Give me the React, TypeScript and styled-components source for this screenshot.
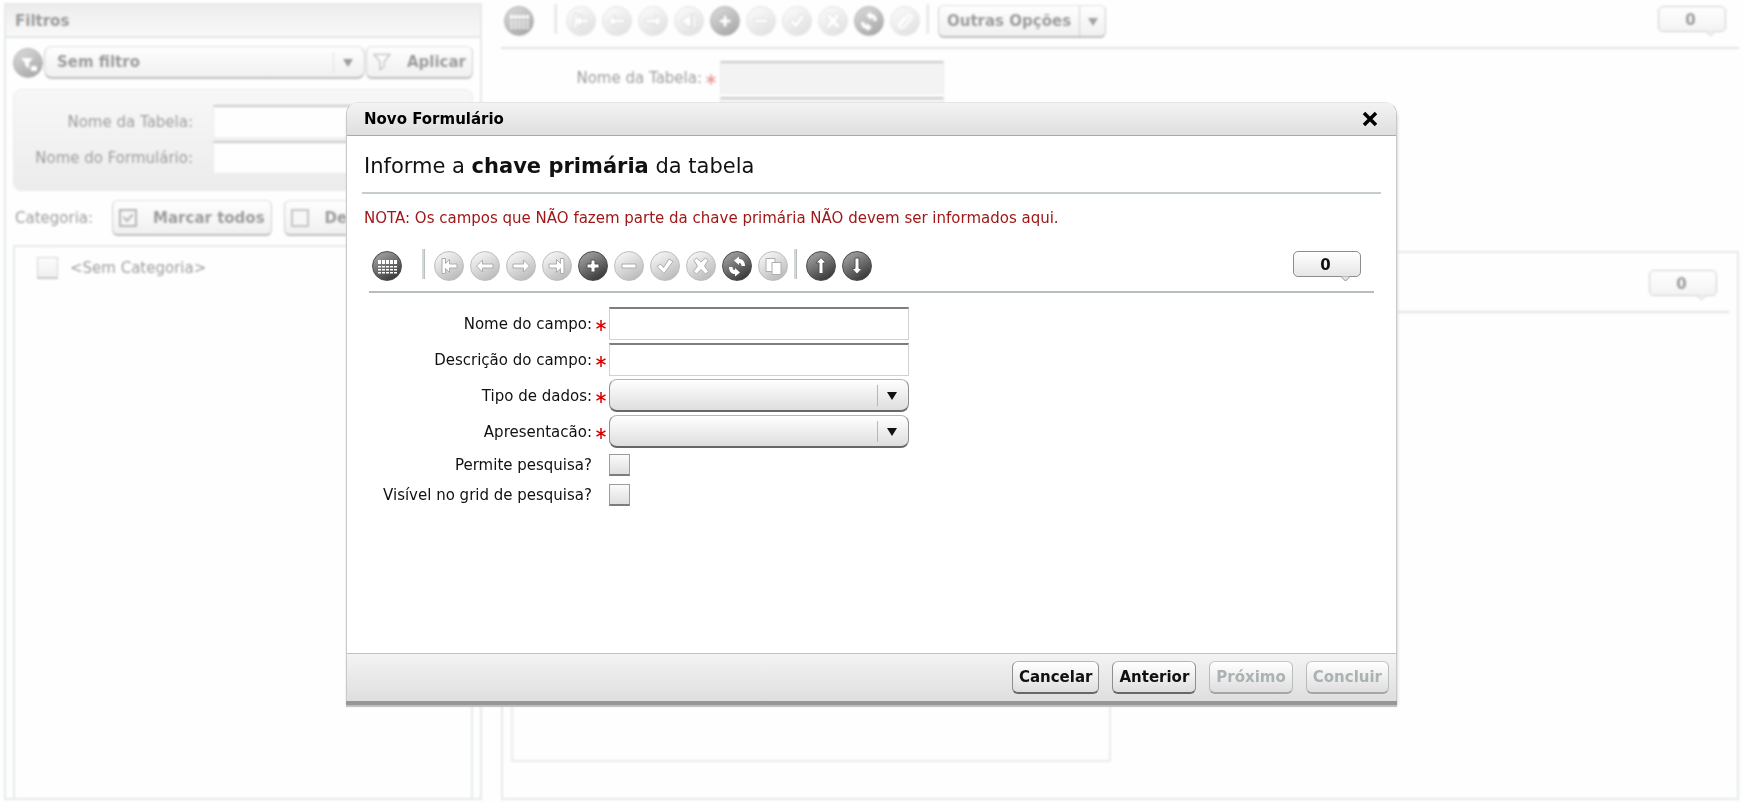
import React from "react";
import styled, { createGlobalStyle, css } from "styled-components";

const GlobalStyle = createGlobalStyle`
  * { box-sizing: border-box; }
  body {
    margin: 0;
    background: #fefefe;
    color: #111;
    font-family: Verdana, "DejaVu Sans", sans-serif;
    font-size: 15px;
    line-height: 20px;
  }
  button, input, select { font: inherit; color: inherit; }
  h1, h2, p { margin: 0; }
`;

/* ---------- shared controls ---------- */

const raised = css`
  background: linear-gradient(#ffffff, #dedede);
  border: 1px solid #8b8f8f;
  border-top-color: #b3b7b7;
  border-bottom: 2px solid #646868;
  border-radius: 6px;
`;

const Button = styled.button`
  ${raised}
  height: 33px;
  padding: 0 6px;
  font-weight: bold;
  white-space: nowrap;
  display: inline-flex;
  align-items: center;
  justify-content: center;
  &:disabled {
    color: #aab3b3;
    border-color: #c4c8c8 #b9bcbc #a4a7a7;
  }
`;

const IconTextButton = styled(Button)<{ $tall?: boolean }>`
  height: ${(p) => (p.$tall ? 36 : 33)}px;
  gap: 16px;
  flex: none;
`;

const SelectShell = styled.span<{ $width?: number }>`
  position: relative;
  display: flex;
  height: 33px;
  ${(p) => (p.$width ? `width: ${p.$width}px;` : "flex: 1; min-width: 0;")}
`;

const SelectBox = styled.select`
  ${raised}
  appearance: none;
  width: 100%;
  padding: 0 40px 0 12px;
  font-weight: bold;
  border-radius: 8px;
`;

const SelectMark = styled.svg`
  position: absolute;
  right: 0;
  top: 0;
  width: 33px;
  height: 33px;
  pointer-events: none;
`;

const TextInput = styled.input<{ $width: number; $off?: boolean }>`
  width: ${(p) => p.$width}px;
  height: 33px;
  padding: 0 6px;
  border: 1px solid #cfd2d2;
  border-top: 2px solid #7c7f7f;
  background: ${(p) => (p.$off ? "#e4e4e4" : "#fff")};
`;

const CheckBox = styled.input`
  appearance: none;
  margin: 0;
  width: 21px;
  height: 22px;
  border: 1px solid #9a9d9d;
  border-bottom: 2px solid #7b7e7e;
  background: linear-gradient(#fbfbfb, #dedede);
`;

function Dropdown({ id, label, value, width }: { id: string; label?: string; value?: string; width?: number }) {
  return (
    <SelectShell $width={width}>
      <SelectBox id={id} aria-label={label}>
        <option>{value ?? ""}</option>
      </SelectBox>
      <SelectMark viewBox="0 0 33 33" aria-hidden="true">
        <path d="M1.500 6v21" stroke="#b5b8b8" />
        <path d="M11 13h10l-5 8z" fill="#111" />
      </SelectMark>
    </SelectShell>
  );
}

/* ---------- toolbar ---------- */

const RoundButton = styled.button<{ $gapAfter?: number }>`
  width: 30px;
  height: 30px;
  flex: none;
  padding: 0;
  margin-right: ${(p) => p.$gapAfter ?? 0}px;
  border: 1px solid #4b4b4b;
  border-radius: 50%;
  background: linear-gradient(150deg, #949494 20%, #3d3d3d 85%);
  display: flex;
  align-items: center;
  justify-content: center;
  &:disabled {
    border-color: #bdbdbd;
    background: linear-gradient(150deg, #eeeeee 20%, #bababa 90%);
  }
  svg { flex: none; display: block; }
`;

type IconName =
  | "grid" | "first" | "prev" | "next" | "last" | "back" | "add" | "remove"
  | "confirm" | "cancel" | "refresh" | "copy" | "clip" | "up" | "down" | "funnel";

const shapes: Record<IconName, React.ReactNode> = {
  grid: (
    <g fill="#fff" stroke="none">
      {[6, 10, 14, 18, 22].map((x) => (
        <React.Fragment key={x}>
          <rect x={x} y="9" width="3" height="4" />
          <rect x={x} y="15" width="3" height="1.500" />
          <rect x={x} y="18" width="3" height="1.500" />
          <rect x={x} y="21" width="3" height="1.500" />
        </React.Fragment>
      ))}
    </g>
  ),
  first: <path d="M8 7.500h3.500v5l4-4v4.500h7.500v4h-7.500v4.500l-4-4v5H8z" />,
  prev: <path d="M6.500 15l6-6v4h10.500v4H12.500v4z" />,
  next: <path d="M23.500 15l-6-6v4H7v4h10.500v4z" />,
  last: <path d="M22 7.500h-3.500v5l-4-4v4.500H7v4h7.500v4.500l4-4v5H22z" />,
  back: <path d="M7 15l10-7v14zM19 8h3v14h-3z" />,
  add: <path d="M13 9h4v4h4v4h-4v4h-4v-4H9v-4h4z" />,
  remove: <path d="M8 13h14v4H8z" />,
  confirm: <path d="M7 15.500l3.500-2.500 3 3.500L19 8l4 2.500-9 12z" />,
  cancel: <path d="M8 9.500L10.500 7l4.500 4L19.500 7 22 9.500 18.500 15l4 5.500-3 2.500-4.500-4.500-4.500 4.500-3-2.500 4-5.500z" />,
  refresh: (
    <g stroke="none">
      <path d="M12 9.500l5-4V8c3.500 0 6 2.500 6 7h-3.500c0-2-.5-3-2.500-3v2z" />
      <path d="M18 21.500l-5 4V23c-3.500 0-6-2.500-6-7h3.500c0 2 .5 3 2.500 3v-2z" />
    </g>
  ),
  copy: (
    <>
      <path d="M8 7.500h9v13H8z" />
      <path d="M14 11.500h9v12h-9z" />
    </>
  ),
  clip: <path d="M10 19l8-9c2-2 5 0 3 3l-7 8c-3 3-7-1-4-4l6-6" fill="none" stroke="#fff" strokeWidth="2" />,
  up: <path d="M15 6.500l5 5.500h-3v10.500h-4V12h-3z" />,
  down: <path d="M15 23l5-5.500h-3V7h-4v10.500h-3z" />,
  funnel: <path d="M8 10h12l-4 5v6l-4-4v-2zM18 18h6v5h-6z" stroke="none" />,
};

const titles: Record<IconName, string> = {
  grid: "Grade", first: "Primeiro", prev: "Voltar", next: "Avançar", last: "Último", back: "Retornar",
  add: "Incluir", remove: "Excluir", confirm: "Confirmar", cancel: "Cancelar edição", refresh: "Atualizar",
  copy: "Copiar", clip: "Anexar", up: "Mover para cima", down: "Mover para baixo", funnel: "Editar filtro",
};

function ToolButton({ icon, off, gapAfter }: { icon: IconName; off?: boolean; gapAfter?: number }) {
  return (
    <RoundButton type="button" disabled={off} aria-label={titles[icon]} $gapAfter={gapAfter}>
      <svg width="30" height="30" viewBox="0 0 30 30" fill="#fff" stroke={off ? "#adadad" : "#555"}>
        {shapes[icon]}
      </svg>
    </RoundButton>
  );
}

const ToolRow = styled.div<{ $pad: string }>`
  display: flex;
  align-items: center;
  gap: 6px;
  padding: ${(p) => p.$pad};
  border-bottom: 2px solid #b6bebe;
`;

const Separator = styled.span`
  width: 3px;
  height: 30px;
  margin: 0 3px 4px 0;
  flex: none;
  background: #d3d9d9;
  border-right: 1px solid #b9c1c1;
`;

const Bubble = styled.output`
  position: relative;
  width: 68px;
  height: 26px;
  margin-left: auto;
  margin-bottom: 4px;
  flex: none;
  border: 1px solid #8c8c8c;
  border-radius: 5px;
  background: linear-gradient(#ffffff, #e6e6e6);
  text-align: center;
  line-height: 26px;
  font-weight: bold;
  padding-right: 3px;
  svg { position: absolute; right: 10px; top: 24px; }
`;

function Counter() {
  return (
    <Bubble>
      0
      <svg width="9" height="6" viewBox="0 0 9 6" aria-hidden="true">
        <path d="M0 .5l4.500 4.500L9 .5" fill="#e6e6e6" stroke="#8c8c8c" />
      </svg>
    </Bubble>
  );
}

/* ---------- page behind the dialog ---------- */

const Page = styled.div`
  min-height: 100vh;
  display: grid;
  grid-template-columns: 478px minmax(0, 1fr);
  gap: 19px;
  padding: 3px 4px;
  filter: blur(1px);
  opacity: 0.42;
`;

const FilterPanel = styled.aside`
  display: flex;
  flex-direction: column;
  border: 2px solid #c6cdcd;
`;

const PanelHeading = styled.h2`
  height: 33px;
  padding: 6px 9px;
  border-bottom: 2px solid #bcc4c4;
  background: linear-gradient(#d6d6d6, #f2f2f2);
  font-size: 15px;
  line-height: 20px;
`;

const PanelBody = styled.div`
  flex: 1;
  display: flex;
  flex-direction: column;
  padding: 8px 7px 0;
`;

const FilterRow = styled.div`
  display: flex;
  align-items: center;
  gap: 1px;
`;

const FilterForm = styled.form`
  display: grid;
  grid-template-columns: 179px minmax(0, 1fr);
  gap: 3px 20px;
  align-items: center;
  margin-top: 10px;
  padding: 15px 12px 16px 0;
  border: 1px solid #cfcfcf;
  border-radius: 8px;
  background: linear-gradient(#efefef, #d4d4d4);
  label { text-align: right; }
`;

const CategoryRow = styled.div`
  display: flex;
  align-items: center;
  gap: 12px;
  margin-top: 9px;
  padding-left: 2px;
  overflow: hidden;
`;

const CategoryLabel = styled.span`
  margin-right: 7px;
`;

const Tree = styled.div`
  flex: 1;
  margin-top: 9px;
  padding: 10px 22px;
  border: 2px solid #c6cdcd;
  border-bottom: 0;
  label { display: flex; align-items: center; gap: 12px; }
`;

const Main = styled.main`
  display: flex;
  flex-direction: column;
`;

const SplitButton = styled.span`
  ${raised}
  display: flex;
  height: 33px;
  flex: none;
  button {
    border: 0;
    background: none;
    padding: 0 8px;
    font-weight: bold;
  }
  button + button { border-left: 1px solid #8b8f8f; width: 26px; }
`;

const TableForm = styled.form`
  display: grid;
  grid-template-columns: 201px 224px;
  gap: 3px 18px;
  align-content: start;
  min-height: 202px;
  padding-top: 12px;
  label { text-align: right; align-self: center; }
`;

const LowerPanel = styled.section`
  flex: 1;
  display: flex;
  flex-direction: column;
  padding: 0 8px 36px;
  border: 2px solid #c6cdcd;
`;

const DetailBox = styled.div`
  flex: 1;
  width: 600px;
  max-width: 100%;
  border: 2px solid #d0d0d0;
`;

const Star = styled.span`
  display: inline-block;
  width: 14px;
  margin-right: -14px;
  text-align: right;
  line-height: 12px;
  svg { vertical-align: -2px; }
`;

function Required() {
  return (
    <Star aria-hidden="true">
      <svg width="10" height="11" viewBox="0 0 10 11" stroke="#d40000" strokeWidth="1.500">
        <path d="M5 0v11M.5 2.800l9 5.400M9.500 2.800l-9 5.400" />
      </svg>
    </Star>
  );
}

function FilterSide() {
  return (
    <FilterPanel>
      <PanelHeading>Filtros</PanelHeading>
      <PanelBody>
        <FilterRow>
          <ToolButton icon="funnel" />
          <Dropdown id="filter" label="Filtro" value="Sem filtro" />
          <IconTextButton type="button">
            <svg width="18" height="18" viewBox="0 0 18 18" fill="#fff" stroke="#777" strokeWidth="1.500" aria-hidden="true">
              <path d="M1 1.500h16l-6 7v5l-4 3v-8z" />
            </svg>
            Aplicar
          </IconTextButton>
        </FilterRow>
        <FilterForm>
          <label htmlFor="f-table">Nome da Tabela:</label>
          <TextInput id="f-table" $width={232} />
          <label htmlFor="f-form">Nome do Formulário:</label>
          <TextInput id="f-form" $width={232} />
        </FilterForm>
        <CategoryRow>
          <CategoryLabel>Categoria:</CategoryLabel>
          <IconTextButton type="button" $tall>
            <svg width="18" height="18" viewBox="0 0 18 18" fill="#eee" stroke="#555" strokeWidth="2" aria-hidden="true">
              <path d="M1 1h16v16H1zM4.500 8l3.500 4 5.500-6.500" />
            </svg>
            Marcar todos
          </IconTextButton>
          <IconTextButton type="button" $tall>
            <svg width="18" height="18" viewBox="0 0 18 18" fill="#eee" stroke="#777" strokeWidth="2" aria-hidden="true">
              <path d="M1 1h16v16H1z" />
            </svg>
            Desmarcar todos
          </IconTextButton>
        </CategoryRow>
        <Tree>
          <label>
            <CheckBox type="checkbox" />
            &lt;Sem Categoria&gt;
          </label>
        </Tree>
      </PanelBody>
    </FilterPanel>
  );
}

function TableSide() {
  return (
    <Main>
      <ToolRow $pad="1px 13px 9px 3px">
        <ToolButton icon="grid" gapAfter={14} />
        <Separator />
        <ToolButton icon="first" off />
        <ToolButton icon="prev" off />
        <ToolButton icon="next" off />
        <ToolButton icon="back" off />
        <ToolButton icon="add" />
        <ToolButton icon="remove" off />
        <ToolButton icon="confirm" off />
        <ToolButton icon="cancel" off />
        <ToolButton icon="refresh" />
        <ToolButton icon="clip" off />
        <Separator />
        <SplitButton>
          <button type="button">Outras Opções</button>
          <button type="button" aria-label="Abrir opções">
            <svg width="10" height="8" viewBox="0 0 10 8" aria-hidden="true">
              <path d="M0 0h10L5 8z" fill="#222" />
            </svg>
          </button>
        </SplitButton>
        <Counter />
      </ToolRow>
      <TableForm>
        <label htmlFor="t-table">
          Nome da Tabela:
          <Required />
        </label>
        <TextInput id="t-table" $width={224} $off />
        <span />
        <TextInput aria-label="Nome do Formulário" $width={224} $off />
      </TableForm>
      <LowerPanel>
        <ToolRow $pad="17px 12px 11px 0">
          <Counter />
        </ToolRow>
        <DetailBox />
      </LowerPanel>
    </Main>
  );
}

/* ---------- dialog ---------- */

const Overlay = styled.div`
  position: fixed;
  inset: 0;
  display: flex;
  align-items: center;
  justify-content: center;
  padding: 0 16px;
`;

const Dialog = styled.section`
  width: 100%;
  max-width: 1051px;
  display: flex;
  flex-direction: column;
  border: 1px solid #c9c9c9;
  border-top-color: #e4e4e4;
  border-bottom: 0;
  border-radius: 12px 12px 0 0;
  background: #fff;
  box-shadow: 0 4px 0 #979797, 0 6px 1px #bdbdbd, 1px 4px 3px #dddddd;
`;

const TitleBar = styled.header`
  display: flex;
  align-items: center;
  justify-content: space-between;
  height: 33px;
  padding: 0 18px 0 17px;
  border-bottom: 1px solid #a9a9a9;
  border-radius: 11px 11px 0 0;
  background: linear-gradient(#f3f3f3, #dfdfdf);
  h1 { font-size: 15px; line-height: 20px; color: #000; }
`;

const CloseButton = styled.button`
  display: flex;
  padding: 0;
  border: 0;
  background: none;
`;

const Body = styled.div`
  flex: 1;
  min-height: 517px;
  padding: 14px 15px 0;
`;

const Lead = styled.p`
  padding: 0 2px 10px;
  border-bottom: 2px solid #c6cdcd;
  font-size: 21px;
  line-height: 32px;
`;

const Note = styled.p`
  padding: 14px 2px 21px;
  color: #a01818;
`;

const Inner = styled.div`
  margin: 0 7px;
`;

const Fields = styled.form`
  display: grid;
  grid-template-columns: 223px minmax(0, 300px);
  gap: 3px 17px;
  padding-top: 14px;
  align-items: center;
  label { text-align: right; white-space: nowrap; }
`;

const CheckCell = styled.div`
  display: flex;
  align-items: center;
  height: 27px;
`;

const Footer = styled.footer`
  display: flex;
  align-items: center;
  justify-content: flex-end;
  gap: 13px;
  height: 48px;
  padding: 0 7px;
  border-top: 1px solid #c2c2c2;
  background: linear-gradient(#f3f3f3, #dfdfdf);
`;

function NewFormDialog() {
  return (
    <Overlay>
      <Dialog role="dialog" aria-labelledby="dialog-title">
        <TitleBar>
          <h1 id="dialog-title">Novo Formulário</h1>
          <CloseButton type="button" aria-label="Fechar">
            <svg width="16" height="16" viewBox="0 0 16 16" stroke="#000" strokeWidth="3.500" aria-hidden="true">
              <path d="M2 2l12 12M14 2L2 14" />
            </svg>
          </CloseButton>
        </TitleBar>
        <Body>
          <Lead>
            Informe a <b>chave primária</b> da tabela
          </Lead>
          <Note>NOTA: Os campos que NÃO fazem parte da chave primária NÃO devem ser informados aqui.</Note>
          <Inner>
            <ToolRow $pad="0 13px 8px 3px">
              <ToolButton icon="grid" gapAfter={14} />
              <Separator />
              <ToolButton icon="first" off />
              <ToolButton icon="prev" off />
              <ToolButton icon="next" off />
              <ToolButton icon="last" off />
              <ToolButton icon="add" />
              <ToolButton icon="remove" off />
              <ToolButton icon="confirm" off />
              <ToolButton icon="cancel" off />
              <ToolButton icon="refresh" />
              <ToolButton icon="copy" off />
              <Separator />
              <ToolButton icon="up" />
              <ToolButton icon="down" />
              <Counter />
            </ToolRow>
            <Fields>
              <label htmlFor="name">
                Nome do campo:
                <Required />
              </label>
              <TextInput id="name" $width={300} />
              <label htmlFor="description">
                Descrição do campo:
                <Required />
              </label>
              <TextInput id="description" $width={300} />
              <label htmlFor="type">
                Tipo de dados:
                <Required />
              </label>
              <Dropdown id="type" width={300} />
              <label htmlFor="presentation">
                Apresentacão:
                <Required />
              </label>
              <Dropdown id="presentation" width={300} />
              <label htmlFor="searchable">Permite pesquisa?</label>
              <CheckCell>
                <CheckBox id="searchable" type="checkbox" />
              </CheckCell>
              <label htmlFor="visible">Visível no grid de pesquisa?</label>
              <CheckCell>
                <CheckBox id="visible" type="checkbox" />
              </CheckCell>
            </Fields>
          </Inner>
        </Body>
        <Footer>
          <Button type="button">Cancelar</Button>
          <Button type="button">Anterior</Button>
          <Button type="button" disabled>Próximo</Button>
          <Button type="button" disabled>Concluir</Button>
        </Footer>
      </Dialog>
    </Overlay>
  );
}

export default function App() {
  return (
    <>
      <GlobalStyle />
      <Page>
        <FilterSide />
        <TableSide />
      </Page>
      <NewFormDialog />
    </>
  );
}
